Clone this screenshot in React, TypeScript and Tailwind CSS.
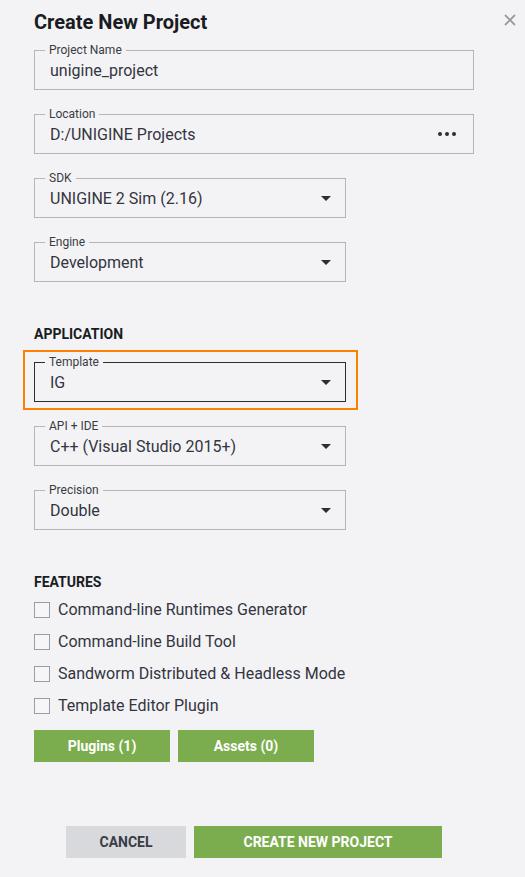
import React from "react";

function Arrow() {
  return (
    <svg width="10" height="5" viewBox="0 0 10 5" className="shrink-0">
      <path d="M0 0 L10 0 L5 5 Z" fill="#2b2d33" />
    </svg>
  );
}

function Dots() {
  return (
    <svg width="18" height="4" viewBox="0 0 18 4" className="shrink-0">
      <circle cx="2" cy="2" r="2" fill="#2b2d33" />
      <circle cx="9" cy="2" r="2" fill="#2b2d33" />
      <circle cx="16" cy="2" r="2" fill="#2b2d33" />
    </svg>
  );
}

function Field({
  label,
  value,
  wide,
  dark,
  right,
}: {
  label: string;
  value: string;
  wide?: boolean;
  dark?: boolean;
  right?: React.ReactNode;
}) {
  return (
    <div
      className={
        "relative h-[40px] border flex items-center pl-[15px] " +
        (wide ? "w-[440px] pr-[17px] " : "w-[312px] pr-[14px] ") +
        (dark ? "border-[#2b2d33]" : "border-[#b5b5bc]")
      }
    >
      <span className="absolute left-[10px] -top-[8px] px-[4px] bg-[#f3f3f6] text-[12px] leading-[14px] text-[#3a3c44]">
        {label}
      </span>
      <span className="flex-1 text-[16px] leading-[20px] text-[#33353f] pt-[2px]">{value}</span>
      {right}
    </div>
  );
}

function Check({ label }: { label: string }) {
  return (
    <div className="h-[32px] flex items-center gap-[8px]">
      <div className="w-[16px] h-[16px] border border-[#9c9ca4] bg-[#f6f6f8]" />
      <span className="text-[16px] leading-[20px] text-[#33353f]">{label}</span>
    </div>
  );
}

export default function App() {
  return (
    <div className="relative w-[525px] h-[877px] bg-[#f3f3f6] font-['Roboto',sans-serif] text-[#1e2026] pl-[34px] overflow-hidden">
      <button className="absolute top-[14px] right-[9px] w-[12px] h-[12px]">
        <svg width="12" height="12" viewBox="0 0 12 12">
          <path d="M1 1 L11 11 M11 1 L1 11" stroke="#9a9aa2" strokeWidth="1.8" />
        </svg>
      </button>

      <h1 className="pt-[10px] text-[20px] leading-[24px] font-bold text-[#1a1c22]">Create New Project</h1>

      <div className="mt-[16px] flex flex-col gap-[24px]">
        <Field label="Project Name" value="unigine_project" wide />
        <Field label="Location" value="D:/UNIGINE Projects" wide right={<Dots />} />
        <Field label="SDK" value="UNIGINE 2 Sim (2.16)" right={<Arrow />} />
        <Field label="Engine" value="Development" right={<Arrow />} />
      </div>

      <h2 className="mt-[44px] text-[14px] leading-[17px] font-bold text-[#1a1c22]">APPLICATION</h2>

      <div className="mt-[7px] -ml-[11px] w-[335px] border-2 border-[#ff8000] pt-[10px] pb-[6px] pl-[9px] pr-[10px]">
        <Field label="Template" value="IG" dark right={<Arrow />} />
      </div>

      <div className="mt-[16px] flex flex-col gap-[24px]">
        <Field label="API + IDE" value="C++ (Visual Studio 2015+)" right={<Arrow />} />
        <Field label="Precision" value="Double" right={<Arrow />} />
      </div>

      <h2 className="mt-[44px] text-[14px] leading-[17px] font-bold text-[#1a1c22]">FEATURES</h2>

      <div className="mt-[3px] flex flex-col">
        <Check label="Command-line Runtimes Generator" />
        <Check label="Command-line Build Tool" />
        <Check label="Sandworm Distributed & Headless Mode" />
        <Check label="Template Editor Plugin" />
      </div>

      <div className="mt-[8px] flex gap-[8px]">
        <button className="w-[136px] h-[32px] bg-[#7bad4f] text-white text-[14px] font-bold">Plugins (1)</button>
        <button className="w-[136px] h-[32px] bg-[#7bad4f] text-white text-[14px] font-bold">Assets (0)</button>
      </div>

      <div className="mt-[64px] ml-[32px] flex gap-[8px]">
        <button className="w-[120px] h-[32px] bg-[#d8d9dd] text-[#3a3c44] text-[14px] font-bold uppercase">Cancel</button>
        <button className="w-[248px] h-[32px] bg-[#7bad4f] text-white text-[14px] font-bold uppercase">Create New Project</button>
      </div>
    </div>
  );
}
